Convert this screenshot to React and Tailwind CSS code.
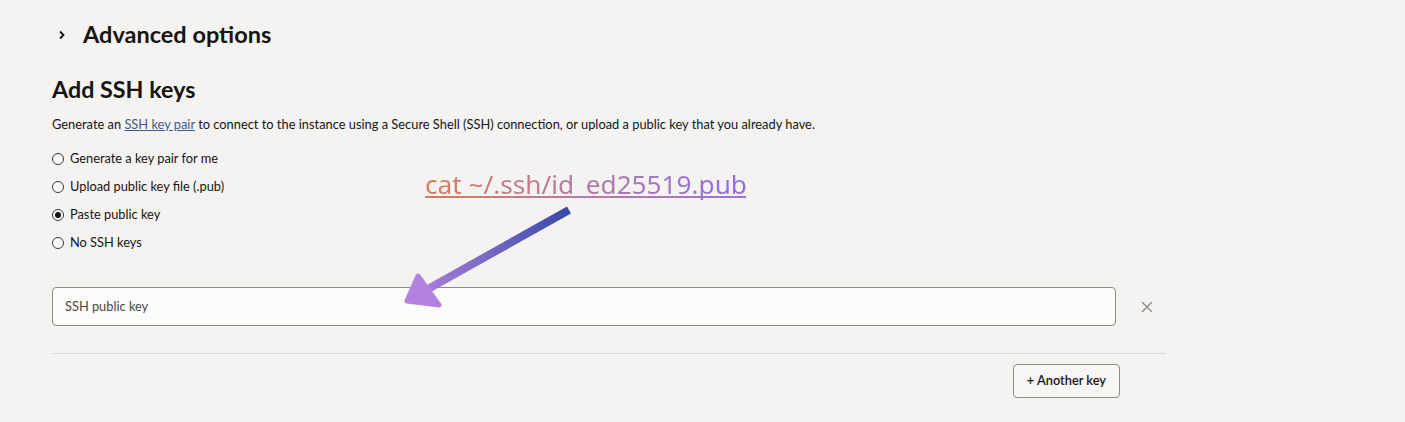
import React from 'react';

const options = [
  { label: 'Generate a key pair for me', checked: false },
  { label: 'Upload public key file (.pub)', checked: false },
  { label: 'Paste public key', checked: true },
  { label: 'No SSH keys', checked: false },
];

const Radio = ({ checked, label }) => (
  <label className="flex items-center h-[28px] gap-[6px] text-[12.8px] text-[#161513]">
    <span className="w-[12px] h-[12px] rounded-full border border-[#3a3835] flex items-center justify-center bg-[#fbfbfa]">
      {checked && <span className="w-[6px] h-[6px] rounded-full bg-[#161513]" />}
    </span>
    {label}
  </label>
);

const Annotation = () => (
  <div className="absolute left-0 top-0 pointer-events-none">
    <div className="absolute left-[425px] top-[166px] text-[26.2px] leading-[36px] whitespace-nowrap bg-gradient-to-r from-[#d97a5c] to-[#8f6ee0] bg-clip-text text-transparent" style={{ fontFamily: '"Noto Sans", sans-serif' }}>
      cat ~/.ssh/id_ed25519.pub
    </div>
    <div className="absolute left-[425px] top-[196px] w-[321px] h-[2px] bg-gradient-to-r from-[#d97a5c] to-[#9a72dc]" />
    <svg className="absolute left-0 top-0" width="800" height="340" viewBox="0 0 800 340">
      <defs>
        <linearGradient id="arr" x1="570" y1="210" x2="410" y2="300" gradientUnits="userSpaceOnUse">
          <stop offset="0" stopColor="#364aa6" />
          <stop offset="1" stopColor="#b584e0" />
        </linearGradient>
      </defs>
      <line x1="569" y1="210" x2="428" y2="289" stroke="url(#arr)" strokeWidth="8" />
      <path d="M418 276 L439 305 L407 301 Z" fill="#b183df" stroke="#b183df" strokeWidth="5" strokeLinejoin="round" />
    </svg>
  </div>
);

export default function App() {
  return (
    <div className="relative min-h-[422px] bg-[#f4f3f1] text-[#161513]" style={{ fontFamily: '"Lato", "Noto Sans", sans-serif' }}>
      <div className="pl-[52px] pt-[21px] w-[1166px]">
        <div className="flex items-center h-[28px]">
          <svg width="14" height="14" viewBox="0 0 14 14" className="ml-[3px]">
            <path d="M5 3.5 L8.5 7 L5 10.5" fill="none" stroke="#161513" strokeWidth="1.8" />
          </svg>
          <span className="ml-[14px] text-[23.5px] font-bold">Advanced options</span>
        </div>

        <h2 className="mt-[26px] text-[23.3px] leading-[28px] font-bold">Add SSH keys</h2>
        <p className="mt-[13px] text-[12.85px] leading-[16px]">
          Generate an <a href="#" className="text-[#3f5c88] underline">SSH key pair</a> to connect to the instance using a Secure Shell (SSH) connection, or upload a public key that you already have.
        </p>

        <div className="mt-[13px] flex flex-col">
          {options.map((o) => (
            <Radio key={o.label} {...o} />
          ))}
        </div>

        <div className="mt-[30px] flex items-center">
          <div className="w-[1064px] h-[39px] rounded-[4px] border border-[#8f8c87] bg-[#fbfbfa] flex items-center px-[12px] text-[12.8px] text-[#4a4845]">
            SSH public key
          </div>
          <svg width="12" height="12" viewBox="0 0 12 12" className="ml-[25px]">
            <path d="M1 1 L11 11 M11 1 L1 11" stroke="#8a8782" strokeWidth="1.3" />
          </svg>
        </div>

        <div className="mt-[27px] h-px bg-[#dcdad6]" />

        <div className="mt-[10px] flex justify-end pr-[46px]">
          <button className="h-[34px] px-[13px] rounded-[4px] border border-[#8f8c87] bg-[#f7f6f4] text-[12.8px] font-semibold text-[#161513]">
            + Another key
          </button>
        </div>
      </div>
      <Annotation />
    </div>
  );
}
